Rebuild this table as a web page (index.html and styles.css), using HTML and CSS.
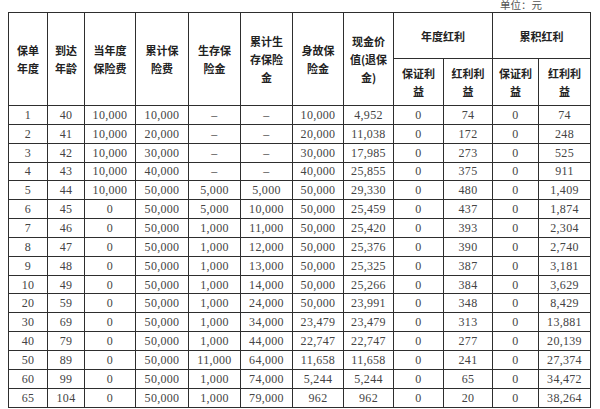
FILE: index.html
```html
<!DOCTYPE html>
<html lang="zh-CN">
<head>
<meta charset="utf-8">
<title>利益演示表</title>
<link rel="stylesheet" href="styles.css">
</head>
<body>
<div class="page">
  <div class="unit">单位：元</div>
  <table class="tbl">
    <colgroup>
      <col class="c39"><col class="c37"><col class="c51"><col class="c53"><col class="c52"><col class="c52">
      <col class="c51"><col class="c50"><col class="c50"><col class="c49"><col class="c46"><col class="c52">
    </colgroup>
    <thead>
      <tr class="h1">
        <th rowspan="2">保单<br>年度</th>
        <th rowspan="2">到达<br>年龄</th>
        <th rowspan="2">当年度<br>保险费</th>
        <th rowspan="2">累计保<br>险费</th>
        <th rowspan="2">生存保<br>险金</th>
        <th rowspan="2">累计生<br>存保险<br>金</th>
        <th rowspan="2">身故保<br>险金</th>
        <th rowspan="2">现金价<br>值(退保<br>金)</th>
        <th colspan="2">年度红利</th>
        <th colspan="2">累积红利</th>
      </tr>
      <tr class="h2">
        <th>保证利<br>益</th>
        <th>红利利<br>益</th>
        <th>保证利<br>益</th>
        <th>红利利<br>益</th>
      </tr>
    </thead>
    <tbody>
      <tr><td>1</td><td>40</td><td>10,000</td><td>10,000</td><td>–</td><td>–</td><td>10,000</td><td>4,952</td><td>0</td><td>74</td><td>0</td><td>74</td></tr>
      <tr><td>2</td><td>41</td><td>10,000</td><td>20,000</td><td>–</td><td>–</td><td>20,000</td><td>11,038</td><td>0</td><td>172</td><td>0</td><td>248</td></tr>
      <tr><td>3</td><td>42</td><td>10,000</td><td>30,000</td><td>–</td><td>–</td><td>30,000</td><td>17,985</td><td>0</td><td>273</td><td>0</td><td>525</td></tr>
      <tr><td>4</td><td>43</td><td>10,000</td><td>40,000</td><td>–</td><td>–</td><td>40,000</td><td>25,855</td><td>0</td><td>375</td><td>0</td><td>911</td></tr>
      <tr><td>5</td><td>44</td><td>10,000</td><td>50,000</td><td>5,000</td><td>5,000</td><td>50,000</td><td>29,330</td><td>0</td><td>480</td><td>0</td><td>1,409</td></tr>
      <tr><td>6</td><td>45</td><td>0</td><td>50,000</td><td>5,000</td><td>10,000</td><td>50,000</td><td>25,459</td><td>0</td><td>437</td><td>0</td><td>1,874</td></tr>
      <tr><td>7</td><td>46</td><td>0</td><td>50,000</td><td>1,000</td><td>11,000</td><td>50,000</td><td>25,420</td><td>0</td><td>393</td><td>0</td><td>2,304</td></tr>
      <tr><td>8</td><td>47</td><td>0</td><td>50,000</td><td>1,000</td><td>12,000</td><td>50,000</td><td>25,376</td><td>0</td><td>390</td><td>0</td><td>2,740</td></tr>
      <tr><td>9</td><td>48</td><td>0</td><td>50,000</td><td>1,000</td><td>13,000</td><td>50,000</td><td>25,325</td><td>0</td><td>387</td><td>0</td><td>3,181</td></tr>
      <tr><td>10</td><td>49</td><td>0</td><td>50,000</td><td>1,000</td><td>14,000</td><td>50,000</td><td>25,266</td><td>0</td><td>384</td><td>0</td><td>3,629</td></tr>
      <tr><td>20</td><td>59</td><td>0</td><td>50,000</td><td>1,000</td><td>24,000</td><td>50,000</td><td>23,991</td><td>0</td><td>348</td><td>0</td><td>8,429</td></tr>
      <tr><td>30</td><td>69</td><td>0</td><td>50,000</td><td>1,000</td><td>34,000</td><td>23,479</td><td>23,479</td><td>0</td><td>313</td><td>0</td><td>13,881</td></tr>
      <tr><td>40</td><td>79</td><td>0</td><td>50,000</td><td>1,000</td><td>44,000</td><td>22,747</td><td>22,747</td><td>0</td><td>277</td><td>0</td><td>20,139</td></tr>
      <tr><td>50</td><td>89</td><td>0</td><td>50,000</td><td>11,000</td><td>64,000</td><td>11,658</td><td>11,658</td><td>0</td><td>241</td><td>0</td><td>27,374</td></tr>
      <tr><td>60</td><td>99</td><td>0</td><td>50,000</td><td>1,000</td><td>74,000</td><td>5,244</td><td>5,244</td><td>0</td><td>65</td><td>0</td><td>34,472</td></tr>
      <tr><td>65</td><td>104</td><td>0</td><td>50,000</td><td>1,000</td><td>79,000</td><td>962</td><td>962</td><td>0</td><td>20</td><td>0</td><td>38,264</td></tr>
    </tbody>
  </table>
</div>
</body>
</html>
```
FILE: styles.css
```css
html, body {
  margin: 0;
  padding: 0;
  background: #ffffff;
}
.page {
  width: 600px;
  height: 409px;
  overflow: hidden;
  padding-left: 8px;
  box-sizing: border-box;
}
.unit {
  height: 12px;
  line-height: 12px;
  font-family: "Liberation Serif", "Noto Sans CJK SC", serif;
  font-size: 10.5px;
  color: #555;
  text-align: right;
  padding-right: 58px;
}
.tbl {
  border-collapse: collapse;
  table-layout: fixed;
  width: 583px;
}
.c39 { width: 39px; }
.c37 { width: 37px; }
.c51 { width: 51px; }
.c53 { width: 53px; }
.c52 { width: 52px; }
.c50 { width: 50px; }
.c49 { width: 49px; }
.c46 { width: 46px; }
.tbl th, .tbl td {
  border: 1px solid #2e2e2e;
  padding: 0;
  text-align: center;
  vertical-align: middle;
}
.tbl th {
  font-family: "Noto Sans CJK SC", sans-serif;
  font-weight: 700;
  font-size: 11px;
  line-height: 18px;
  color: #222;
}
.h1 { height: 46px; }
.h2 { height: 47px; }
.tbl td {
  font-family: "Liberation Serif", serif;
  font-size: 12px;
  letter-spacing: 0.3px;
  color: #444;
  height: 17.85px;
  line-height: 14px;
}
```
